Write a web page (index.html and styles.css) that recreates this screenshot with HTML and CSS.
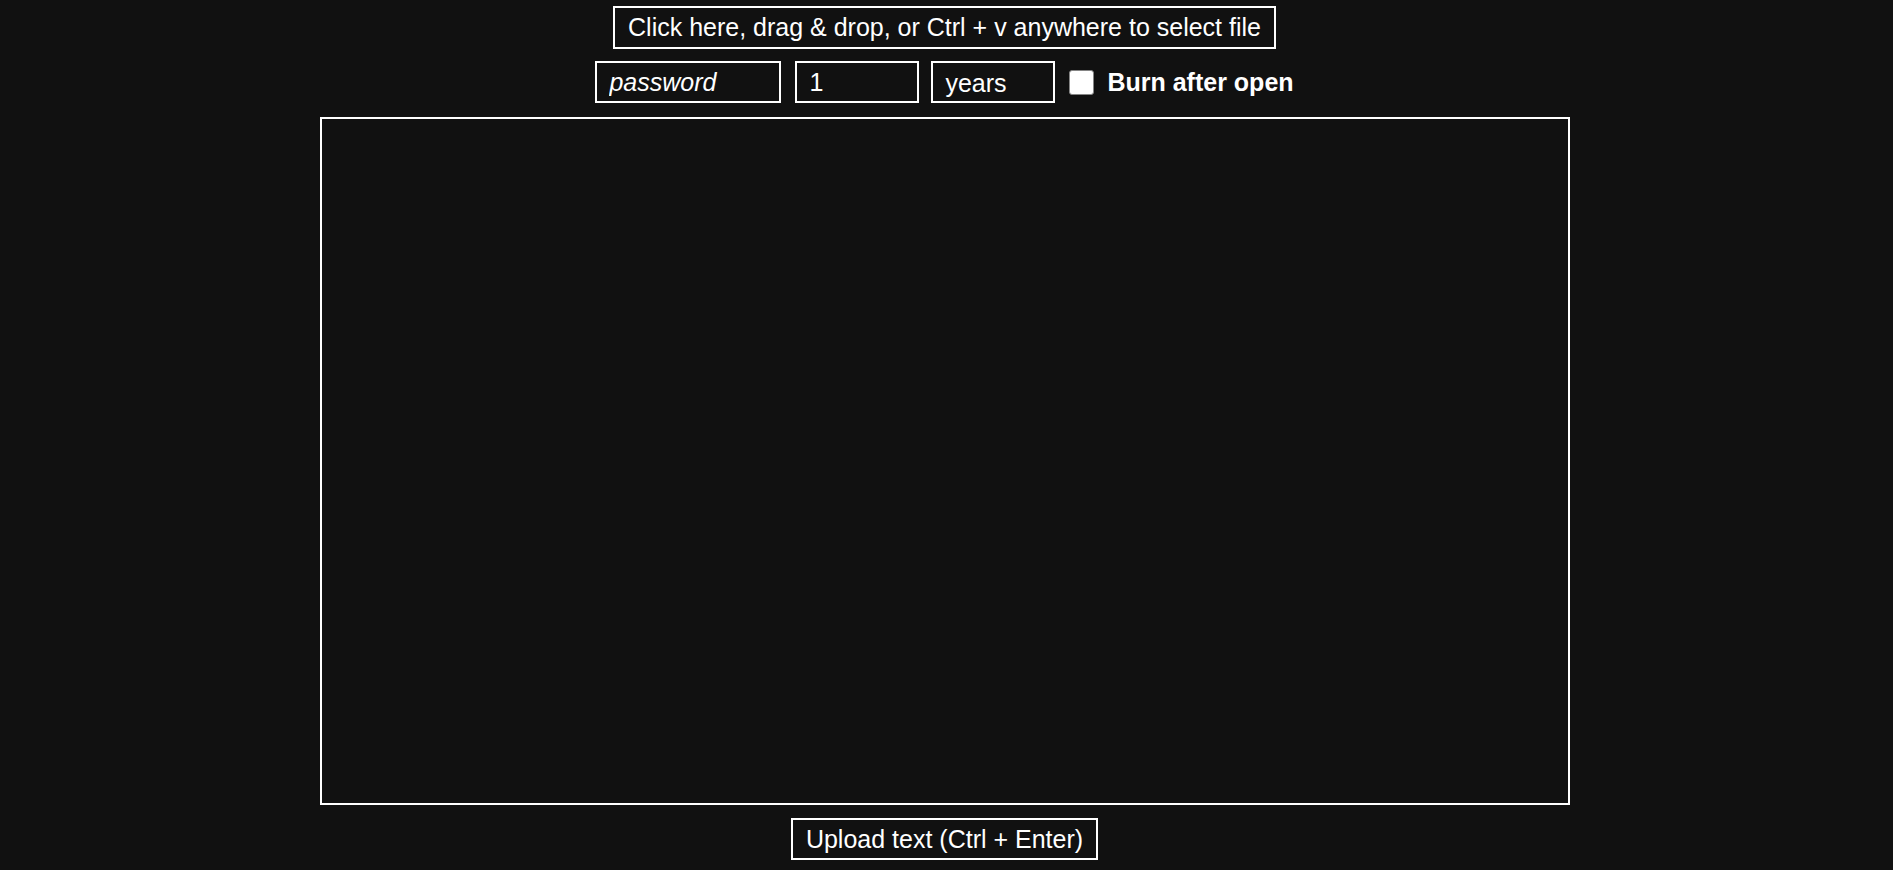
FILE: index.html
```html
<!DOCTYPE html>
<html lang="en">
<head>
<meta charset="utf-8">
<title>Upload</title>
<link rel="stylesheet" href="styles.css">
</head>
<body>
<main class="page">
  <button class="btn file-btn" type="button">Click here, drag &amp; drop, or Ctrl + v anywhere to select file</button>
  <div class="options">
    <input class="field field-password" type="text" placeholder="password">
    <input class="field field-number" type="text" value="1">
    <div class="field field-unit">years</div>
    <label class="burn">
      <input class="check" type="checkbox">
      <span class="burn-text">Burn after open</span>
    </label>
  </div>
  <textarea class="text-area"></textarea>
  <button class="btn upload-btn" type="button">Upload text (Ctrl + Enter)</button>
</main>
</body>
</html>
```
FILE: styles.css
```css
html, body {
  margin: 0;
  padding: 0;
  background: #111111;
  color: #ffffff;
  font-family: "Liberation Sans", Arial, sans-serif;
}

.page {
  display: flex;
  flex-direction: column;
  align-items: center;
  padding-top: 6px;
  padding-right: 4px;
}

.btn {
  box-sizing: border-box;
  height: 43px;
  border: 2px solid #ffffff;
  background: transparent;
  color: #ffffff;
  font-family: "Liberation Sans", Arial, sans-serif;
  font-size: 25px;
  line-height: 29px;
  padding: 0 13px;
  margin: 0;
  cursor: pointer;
}

.options {
  display: flex;
  align-items: center;
  gap: 14px;
  margin-top: 12px;
}

.field {
  box-sizing: border-box;
  height: 42px;
  border: 2px solid #ffffff;
  background: transparent;
  color: #ffffff;
  font-family: "Liberation Sans", Arial, sans-serif;
  font-size: 25px;
  padding: 0 12px;
  margin: 0;
  outline: none;
  display: flex;
  align-items: center;
}

.field::placeholder {
  color: #ffffff;
  opacity: 1;
  font-style: italic;
}

.field-password {
  width: 186px;
}

.field-number {
  width: 124px;
}

.field-unit {
  width: 124px;
  margin-left: -2px;
  padding-top: 3px;
}

.burn {
  display: flex;
  align-items: center;
  gap: 13px;
}

.check {
  appearance: none;
  -webkit-appearance: none;
  box-sizing: border-box;
  width: 25px;
  height: 25px;
  margin: 0;
  background: #ffffff;
  border: 1.5px solid #858585;
  border-radius: 3px;
}

.burn-text {
  font-weight: bold;
  font-size: 25px;
}

.text-area {
  box-sizing: border-box;
  width: 1250px;
  height: 688px;
  margin-top: 14px;
  border: 2px solid #ffffff;
  background: transparent;
  color: #ffffff;
  resize: none;
  outline: none;
  padding: 4px;
  font-family: "Liberation Mono", monospace;
  font-size: 16px;
}

.upload-btn {
  margin-top: 13px;
  height: 42px;
}
```
